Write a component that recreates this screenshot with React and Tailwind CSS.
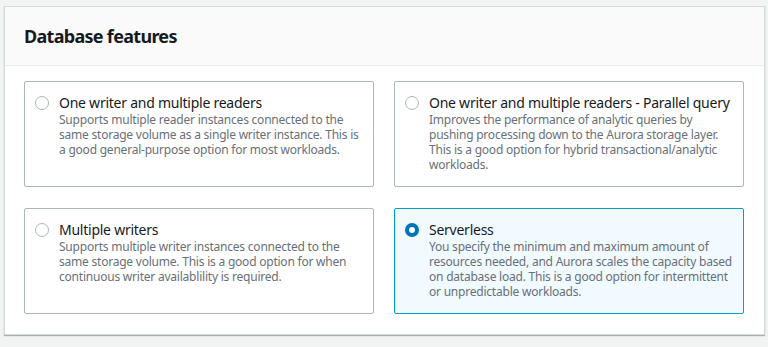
const options = [
  {
    title: "One writer and multiple readers",
    desc: "Supports multiple reader instances connected to the same storage volume as a single writer instance. This is a good general-purpose option for most workloads.",
  },
  {
    title: "One writer and multiple readers - Parallel query",
    desc: "Improves the performance of analytic queries by pushing processing down to the Aurora storage layer. This is a good option for hybrid transactional/analytic workloads.",
  },
  {
    title: "Multiple writers",
    desc: "Supports multiple writer instances connected to the same storage volume. This is a good option for when continuous writer availablility is required.",
  },
  {
    title: "Serverless",
    desc: "You specify the minimum and maximum amount of resources needed, and Aurora scales the capacity based on database load. This is a good option for intermittent or unpredictable workloads.",
    selected: true,
  },
]

const Radio = ({ checked }) =>
  checked ? (
    <span className="mt-[2px] w-[14px] h-[14px] rounded-full bg-[#0073bb] flex items-center justify-center shrink-0">
      <span className="w-[6px] h-[6px] rounded-full bg-white" />
    </span>
  ) : (
    <span className="mt-[2px] w-[14px] h-[14px] rounded-full border border-[#aab7b8] bg-white shrink-0" />
  )

export default function App() {
  return (
    <div className="w-[768px] h-[347px] bg-[#f2f3f3] pt-[6px] pl-[4px] font-['Noto_Sans',sans-serif]">
      <div className="w-[761px] bg-white border border-[#d5dbdb] shadow-[0_1px_1px_0_rgba(0,28,36,0.3)]">
        <div className="h-[59px] bg-[#fafafa] border-b border-[#eaeded] px-[19px] flex items-center">
          <h2 className="text-[18px] font-bold text-[#16191f] tracking-[-0.7px]">Database features</h2>
        </div>
        <div className="grid grid-cols-2 gap-x-[20px] gap-y-[21px] pl-[19px] pr-[20px] pt-[15px] pb-[20px]">
          {options.map((o) => (
            <div
              key={o.title}
              className={`h-[106px] rounded-[2px] border pl-[10px] pr-[8px] pt-[12px] flex gap-[10px] ${
                o.selected ? "bg-[#f1faff] border-[#00a1c9]" : "bg-white border-[#aab7b8]"
              }`}
            >
              <Radio checked={o.selected} />
              <div>
                <div className="text-[14px] leading-[18px] text-[#16191f] tracking-[-0.25px] whitespace-nowrap">{o.title}</div>
                <div className="text-[12px] leading-[15px] text-[#687078] tracking-[-0.22px]">{o.desc}</div>
              </div>
            </div>
          ))}
        </div>
      </div>
    </div>
  )
}
